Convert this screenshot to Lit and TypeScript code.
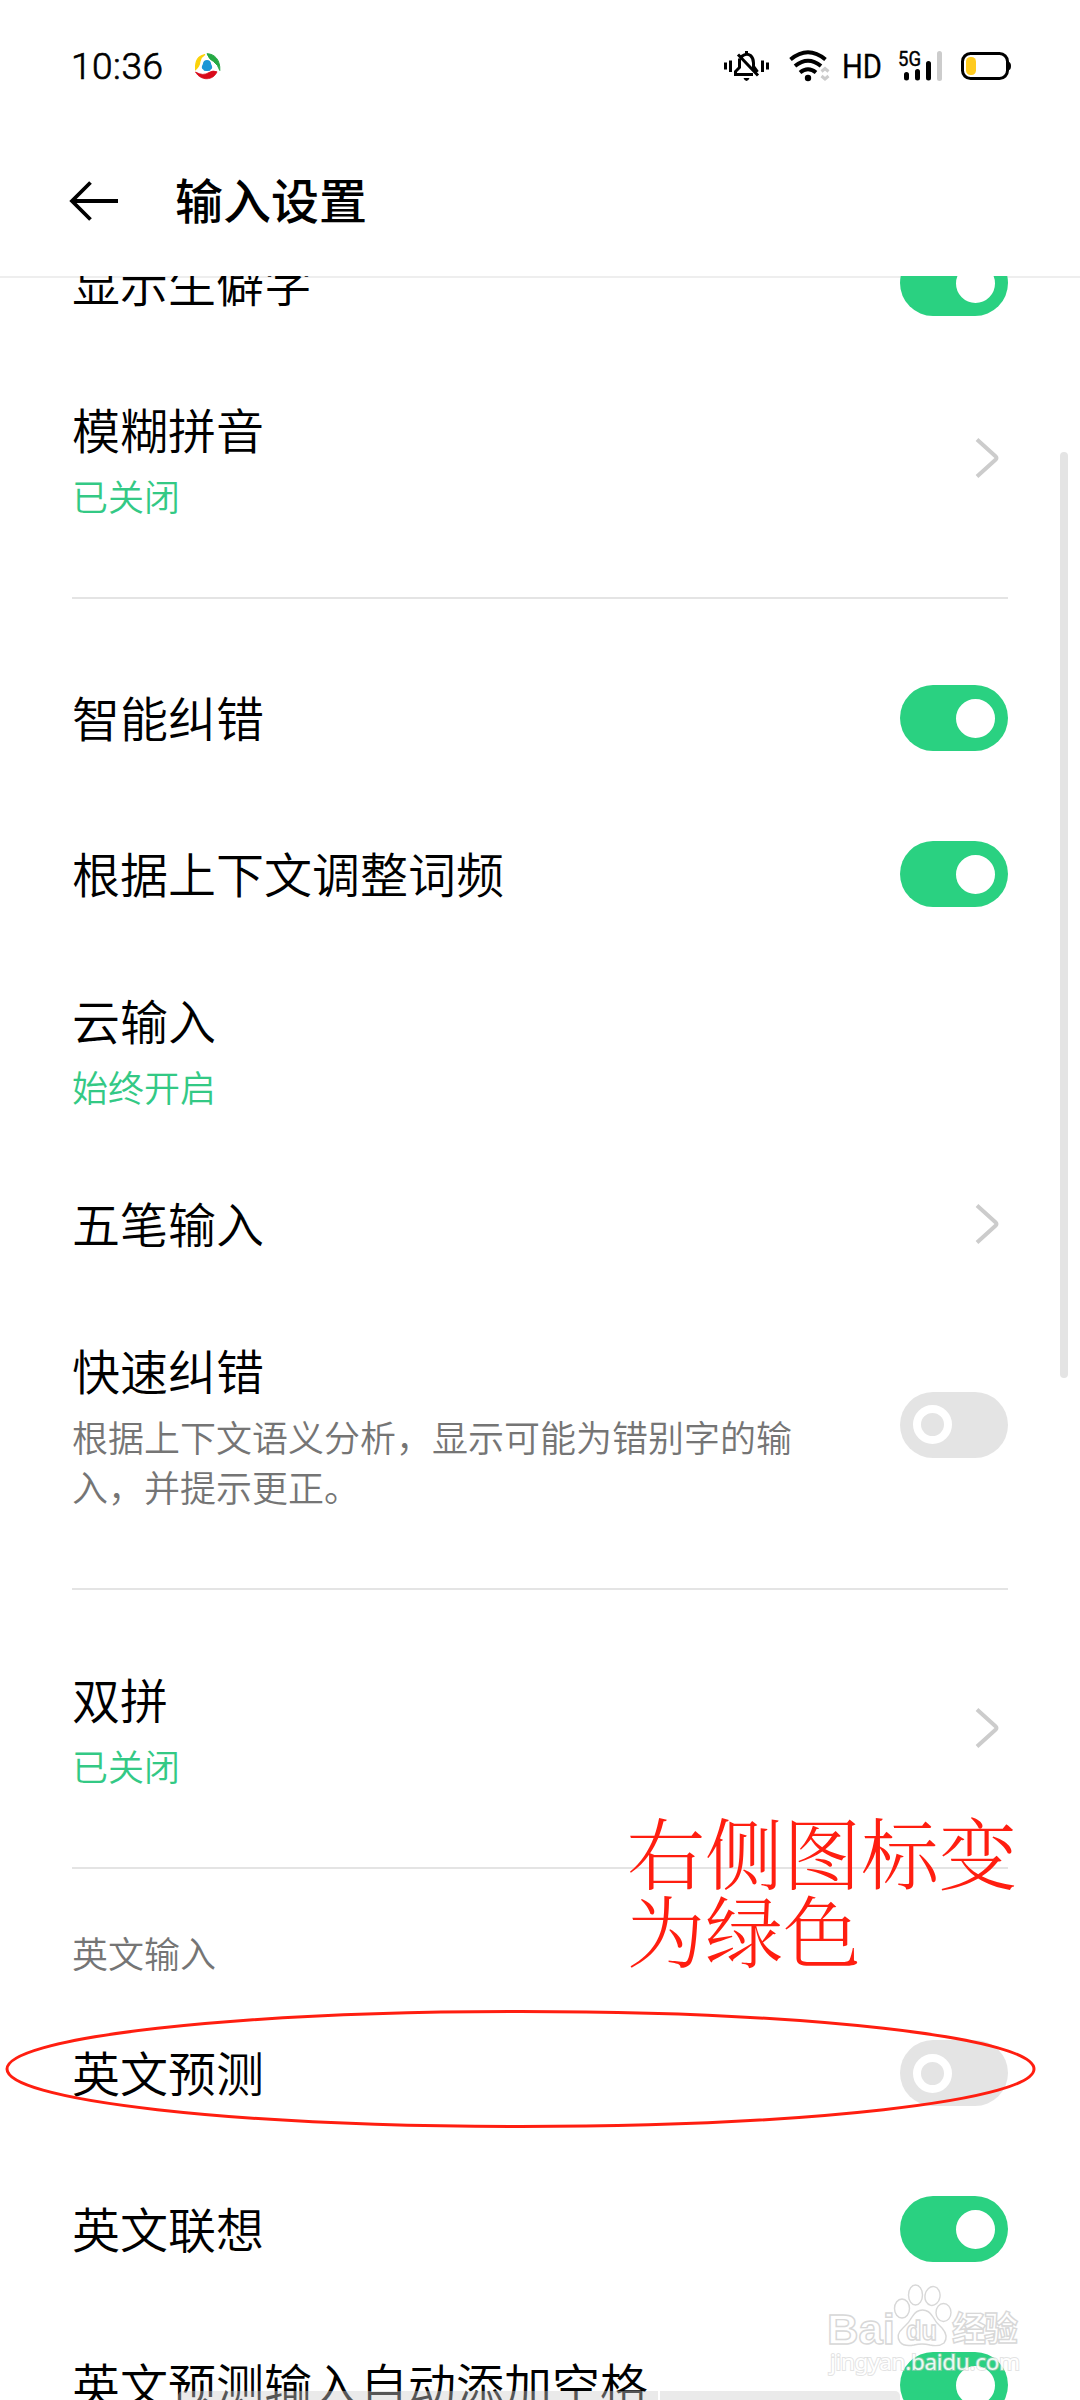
import { LitElement, html, css, svg, nothing } from "lit";
import { customElement, property } from "lit/decorators.js";
import { classMap } from "lit/directives/class-map.js";

type Control = "on" | "off" | "link" | "none";

interface Item {
  kind: "row" | "divider" | "category";
  title?: string;
  summary?: string;
  tone?: "green" | "gray";
  control?: Control;
}

const row = (title: string, control: Control, summary = "", tone: "green" | "gray" = "green"): Item => ({
  kind: "row",
  title,
  control,
  summary,
  tone,
});
const divider: Item = { kind: "divider" };

const ITEMS: Item[] = [
  row("显示生僻字", "on"),
  row("模糊拼音", "link", "已关闭"),
  divider,
  row("智能纠错", "on"),
  row("根据上下文调整词频", "on"),
  row("云输入", "none", "始终开启"),
  row("五笔输入", "link"),
  row("快速纠错", "off", "根据上下文语义分析，显示可能为错别字的输入，并提示更正。", "gray"),
  divider,
  row("双拼", "link", "已关闭"),
  divider,
  { kind: "category", title: "英文输入" },
  row("英文预测", "off"),
  row("英文联想", "on"),
  row("英文预测输入自动添加空格", "on"),
];

@customElement("toggle-switch")
class ToggleSwitch extends LitElement {
  @property({ type: Boolean }) on = false;

  static styles = css`
    :host {
      display: block;
      flex: none;
    }
    .track {
      box-sizing: border-box;
      width: 108px;
      height: 66px;
      padding: 13px;
      border-radius: 33px;
      background: #e4e4e4;
      display: flex;
      align-items: center;
    }
    .track.on {
      background: #2ad181;
      justify-content: flex-end;
    }
    .knob {
      box-sizing: border-box;
      width: 39px;
      height: 39px;
      border-radius: 50%;
      border: 8px solid #fff;
    }
    .on .knob {
      background: #fff;
    }
  `;

  render() {
    return html`<div class=${classMap({ track: true, on: this.on })}><div class="knob"></div></div>`;
  }
}

@customElement("setting-row")
class SettingRow extends LitElement {
  @property({ attribute: false }) item!: Item;

  static styles = css`
    :host {
      display: block;
      flex: none;
    }
    .row {
      box-sizing: border-box;
      min-height: 156px;
      padding: 0 72px;
      display: flex;
      align-items: center;
      justify-content: space-between;
    }
    .row.tall {
      padding-top: 34px;
      padding-bottom: 33px;
    }
    .title {
      font-size: 48px;
      line-height: 67px;
      padding-bottom: 3px;
      font-weight: 350;
      color: #000;
      white-space: nowrap;
    }
    .tall .title {
      padding-bottom: 5px;
    }
    .summary {
      margin-top: 3px;
      padding-bottom: 2px;
      width: 720px;
      font-size: 36px;
      line-height: 50px;
      font-weight: 350;
    }
    .green {
      color: #33c985;
    }
    .gray {
      color: #757575;
    }
    .chevron {
      display: block;
      width: 26px;
      height: 42px;
      margin-right: 8px;
    }
    .tall .chevron {
      margin-bottom: 1px;
    }
  `;

  private control() {
    switch (this.item.control) {
      case "on":
        return html`<toggle-switch on></toggle-switch>`;
      case "off":
        return html`<toggle-switch></toggle-switch>`;
      case "link":
        return html`<svg class="chevron" viewBox="0 0 26 42">
          <path d="M3 2.5 21.5 19.2Q23.5 21 21.5 22.8L3 39.5" fill="none" stroke="#ccc" stroke-width="4" />
        </svg>`;
      default:
        return nothing;
    }
  }

  render() {
    const { title, summary, tone } = this.item;
    return html`<div class=${classMap({ row: true, tall: !!summary })}>
      <div>
        <div class="title">${title}</div>
        ${summary ? html`<div class="summary ${tone}">${summary}</div>` : nothing}
      </div>
      ${this.control()}
    </div>`;
  }
}

@customElement("status-bar")
class StatusBar extends LitElement {
  static styles = css`
    :host {
      display: block;
    }
    .bar {
      height: 130px;
      display: flex;
      justify-content: space-between;
    }
    .bar svg {
      display: block;
      height: 130px;
    }
    .latin {
      font-family: Roboto, "Liberation Sans", sans-serif;
    }
    .clock {
      font-weight: 300;
      stroke: #000;
      stroke-width: 0.7px;
    }
  `;

  render() {
    return html`<div class="bar">
      <svg width="300" viewBox="0 0 300 130">
        <text class="latin clock" x="71" y="79" font-size="37" textLength="92">10:36</text>
        <g fill="none" stroke-width="5">
          <path d="M205 54.6C199.500 55.500 195 60 195.600 69.500Q199.500 66.500 200 61Q201 57 205 54.600Z" fill="#fbd20a" stroke="#fbd20a" stroke-width="1.200" />
          <path d="M207 53.700C214.500 53.800 220.500 60 219.800 70.500Q218 64.500 213.500 61.500Q209 59.500 207 53.700Z" fill="#25a944" stroke="#25a944" stroke-width="1" />
          <path d="M195.500 72Q203 76.500 209 72.500Q213 70 217 71.800C213.500 80.500 201 81.500 195.500 72Z" fill="#d80a1a" stroke="#d80a1a" stroke-width=".8" />
        </g>
        <path d="M207 60q3.600 0 4.200 4.200 2.200 4-.4 5.300-.4 1.800-3.800 1.500-3.400.3-3.800-1.500-2.600-1.300-.4-5.300Q203.400 60 207 60Z" fill="#1d97d5" />
      </svg>
      <svg width="380" viewBox="700 0 380 130">
        <g fill="none" stroke="#000" stroke-width="3">
          <path d="M725.500 62.500v7M730.500 60.500v11.500M762.500 60.500v11.500M767.500 62.500v7" />
          <path d="M738 54.500 758 75.500M741.500 56.500Q746.500 52.500 750.500 55.500 753.500 58 753.500 63v3.500L757.500 72M746.500 51v3.500M739.500 58.500v9L735.500 71.500v3H753" />
        </g>
        <path d="M743.500 78h6q-1 3-3 3t-3-3Z" />
        <g fill="none" stroke="#000" stroke-width="4">
          <path d="M790.500 59.500Q808 45 825.500 59.500" />
          <path d="M795 66Q808 55.500 821 66" />
          <path d="M800 72.500Q808 66 816 72.500" />
        </g>
        <circle cx="808" cy="78" r="3.200" />
        <path d="M821.500 71.500 825 68.500 828.500 71.500M821.500 76 825 79 828.500 76" fill="none" stroke="#ccc" stroke-width="3" />
        <text class="latin" x="842" y="78" font-size="33.500" textLength="40" lengthAdjust="spacingAndGlyphs" stroke="#000" stroke-width=".3">HD</text>
        <text class="latin" x="898" y="65.500" font-size="20" textLength="23" lengthAdjust="spacingAndGlyphs" stroke="#000" stroke-width=".4">5G</text>
        <g stroke-linecap="round" stroke-width="5">
          <path d="M906.500 74.500v3.500M917.500 71.500v6.500M928.500 63.500v14.500" stroke="#000" />
          <path d="M939.500 53.500V78.500" stroke="#ccc" />
        </g>
        <rect x="962.500" y="53.500" width="45" height="25" rx="8" fill="none" stroke="#000" stroke-width="3" />
        <path d="M1008 61.500q3 .5 3 4.500t-3 4.500Z" />
        <rect x="966" y="57" width="10" height="18" rx="4.500" fill="#ffcb1f" />
      </svg>
    </div>`;
  }
}

@customElement("app-root")
class AppRoot extends LitElement {
  static styles = css`
    :host {
      display: block;
      font-family: "Noto Sans CJK SC", sans-serif;
    }
    .screen {
      position: relative;
      width: 1080px;
      height: 2400px;
      overflow: hidden;
      background: #fff;
      color: #000;
      display: flex;
      flex-direction: column;
    }
    .header {
      box-sizing: border-box;
      height: 148px;
      flex: none;
      padding: 0 69px 4px;
      border-bottom: 2px solid #eee;
      display: flex;
      align-items: center;
      gap: 56px;
    }
    .header svg {
      display: block;
      width: 50px;
      height: 42px;
    }
    .heading {
      margin: 0;
      padding-bottom: 6px;
      font-size: 48px;
      line-height: 66px;
      font-weight: 500;
    }
    .list {
      flex: 1;
      min-height: 0;
      margin-top: -2px;
      overflow: hidden;
      display: flex;
      flex-direction: column;
    }
    .list > :first-child {
      margin-top: -71px;
    }
    .divider {
      flex: none;
      height: 2px;
      margin: 42px 72px 41px;
      background: #e4e4e4;
    }
    .category {
      flex: none;
      box-sizing: border-box;
      height: 85px;
      padding: 17px 72px 0;
      font-size: 36px;
      line-height: 50px;
      font-weight: 350;
      color: #757575;
    }
    .scrollbar {
      position: absolute;
      right: 12px;
      top: 452px;
      width: 8px;
      height: 926px;
      border-radius: 4px;
      background: #e4e4e4;
    }
    .home {
      position: absolute;
      left: 178px;
      bottom: 0;
      width: 722px;
      height: 9px;
      display: flex;
      gap: 2px;
    }
    .home-part {
      flex: none;
      width: 480px;
      border-radius: 5px 0 0 0;
      background: rgba(205, 205, 205, 0.42);
    }
    .home-part + .home-part {
      width: 240px;
      border-radius: 0 5px 0 0;
    }
    .note {
      position: absolute;
      left: 627px;
      top: 1811px;
      width: 395px;
      font-family: "Noto Serif CJK SC", "Noto Sans CJK SC", serif;
      font-weight: 300;
      font-size: 78px;
      line-height: 78px;
      color: #ff1e10;
    }
    .overlay {
      position: absolute;
      left: 0;
      top: 1980px;
      width: 1080px;
      height: 420px;
    }
    .mark {
      fill: #fff;
      stroke: #d4d4d4;
      stroke-width: 1.4px;
    }
    .brand {
      font-family: "Liberation Sans", sans-serif;
      font-weight: 700;
    }
    .brand-cjk {
      font-family: "Noto Sans CJK SC", sans-serif;
      font-weight: 700;
    }
    .site {
      font-family: "Noto Sans", sans-serif;
      font-weight: 400;
      stroke-width: 2px;
      stroke: rgba(200, 200, 200, 0.55);
      paint-order: stroke;
    }
  `;

  private renderItem(item: Item) {
    if (item.kind === "divider") return html`<div class="divider"></div>`;
    if (item.kind === "category") return html`<div class="category">${item.title}</div>`;
    return html`<setting-row .item=${item}></setting-row>`;
  }

  private watermark() {
    return svg`<g opacity=".9">
      <text class="mark brand" x="827" y="343.800" font-size="43" textLength="68" lengthAdjust="spacingAndGlyphs">Bai</text>
      <g class="mark">
        <ellipse cx="902" cy="308.500" rx="7.500" ry="9.500" />
        <ellipse cx="915.500" cy="295" rx="7" ry="10" />
        <ellipse cx="932.500" cy="296" rx="7.500" ry="9.500" transform="rotate(10 932.500 296)" />
        <ellipse cx="943.500" cy="312.500" rx="7.500" ry="9" />
        <path d="M922.500 310Q929 310 933 317 936 323 942 328 949 336 944 343 939 347 930 345 922 343 914 345 904 347 900 342 895 335 903 328 909 323 912 317 916 310 922.500 310Z" />
      </g>
      <text class="mark brand" x="906" y="340" font-size="27" textLength="31" lengthAdjust="spacingAndGlyphs">du</text>
      <text class="mark brand-cjk" x="952" y="341" font-size="34" textLength="66">经验</text>
      <text class="mark site" x="830" y="370" font-size="22.500" textLength="190">jingyan.baidu.com</text>
    </g>`;
  }

  render() {
    return html`<div class="screen">
      <status-bar></status-bar>
      <header class="header">
        <svg viewBox="0 0 50 42">
          <path d="M49 21H4M21.500 2.500 3 21 21.500 39.500" fill="none" stroke="#000" stroke-width="3.800" />
        </svg>
        <h1 class="heading">输入设置</h1>
      </header>
      <main class="list">${ITEMS.map((i) => this.renderItem(i))}</main>
      <div class="scrollbar"></div>
      <div class="home"><div class="home-part"></div><div class="home-part"></div></div>
      <div class="note">右侧图标变为绿色</div>
      <svg class="overlay" viewBox="0 0 1080 420">
        <ellipse cx="520.500" cy="89" rx="513.500" ry="57.500" fill="none" stroke="#ff1e10" stroke-width="3" />
        <g transform="translate(0 20)">${this.watermark()}</g>
      </svg>
    </div>`;
  }
}
